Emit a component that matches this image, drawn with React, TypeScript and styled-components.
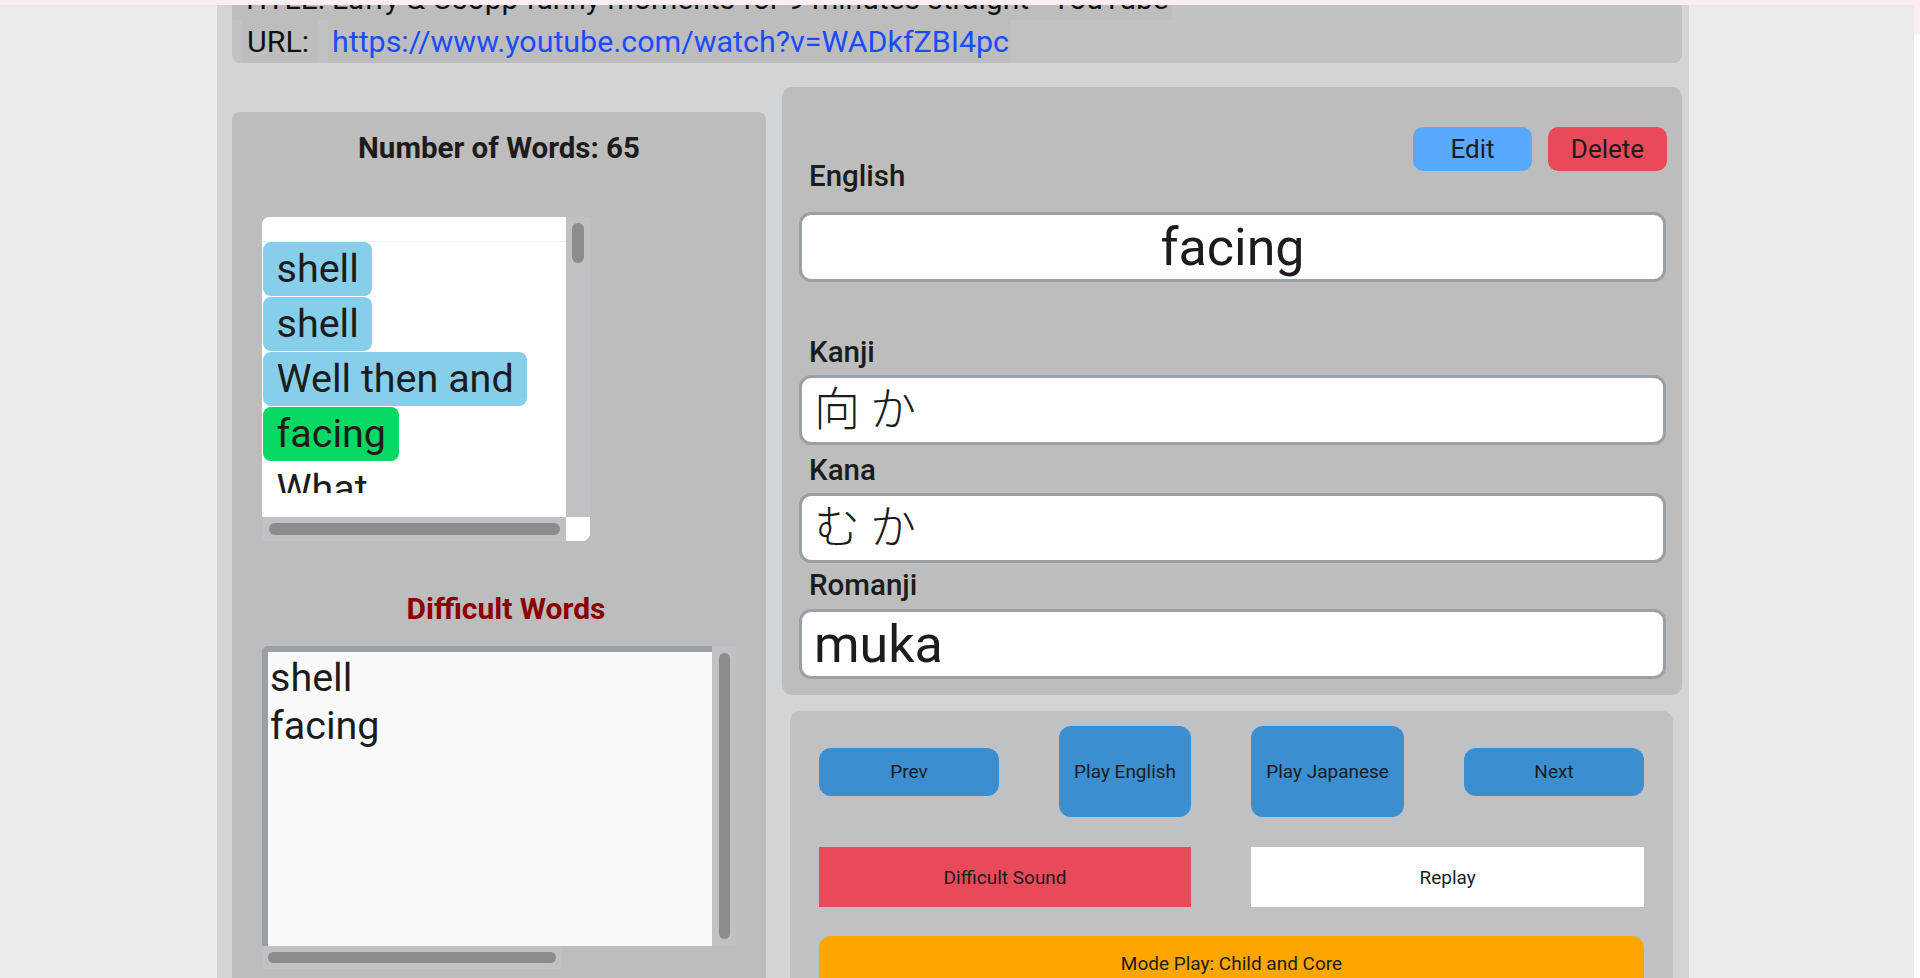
import React from "react";
import styled, { createGlobalStyle, css } from "styled-components";

const GlobalStyle = createGlobalStyle`
  html, body {
    margin: 0;
    padding: 0;
    overflow: hidden;
    background: #ebebeb;
  }
  body {
    font-family: Roboto, "Noto Sans", "Liberation Sans", sans-serif;
    color: #1c1c1c;
  }
  * { box-sizing: border-box; }
`;

const TopStripe = styled.div`
  position: fixed;
  top: 0;
  left: 0;
  right: 0;
  height: 5px;
  background: #fbeef3;
  z-index: 10;
`;

const EdgeStrip = styled.div`
  position: fixed;
  top: 0;
  right: 0;
  bottom: 0;
  width: 6px;
  background: linear-gradient(#fbeef3 0 35px, #ffffff 35px);
  z-index: 10;
`;

const Page = styled.div`
  width: 1472px;
  margin: -23px 0 0 217px;
  min-height: 1100px;
  background: #d1d5d8;
  padding: 0 7px 0 15px;
`;

/* ---------- header ---------- */

const HeaderCard = styled.header`
  background: #c1c2c5;
  border-radius: 0 0 8px 8px;
  display: flex;
  flex-direction: column;
  align-items: flex-start;
  line-height: 43px;
  color: #111;
`;

const TitleRow = styled.div`
  display: flex;
  height: 43px;
  background: #bdbdbd;
  padding: 0 3px 0 9px;
  font-size: 30px;
  white-space: nowrap;
`;

const TitleLabel = styled.span`
  flex: none;
  width: 91px;
`;

const UrlRow = styled.div`
  display: flex;
  gap: 11px;
  height: 43px;
  padding-left: 11px;
  font-size: 30.4px;
`;

const HeaderCell = styled.div<{ $width?: number }>`
  background: #bdbdbd;
  padding: 0 2px 0 4px;
  white-space: nowrap;
  ${(p) => (p.$width ? `width: ${p.$width}px;` : "")}
`;

const UrlLink = styled.a`
  color: #1a4cff;
  text-decoration: none;
`;

/* ---------- layout ---------- */

const Main = styled.div`
  display: flex;
  align-items: flex-start;
  gap: 16px;
  margin-top: 24px;
`;

const LeftCard = styled.section`
  flex: none;
  width: 534px;
  margin-top: 25px;
  background: #bdbdbd;
  border-radius: 8px;
  padding: 20px 30px 40px;
`;

const CardTitle = styled.h2<{ $color?: string; $gap?: number; $size: number; $shift?: number }>`
  margin: ${(p) => p.$gap ?? 0}px 0 0;
  padding-left: ${(p) => p.$shift ?? 0}px;
  font-size: ${(p) => p.$size}px;
  line-height: 33px;
  font-weight: 700;
  text-align: center;
  color: ${(p) => p.$color ?? "#1c1c1c"};
`;

/* ---------- word list ---------- */

const ListBox = styled.div`
  margin-top: 52px;
  width: 328px;
  height: 324px;
  display: grid;
  grid-template-columns: 304px 24px;
  grid-template-rows: 300px 24px;
  border-radius: 8px 0 8px 0;
  overflow: hidden;
  background: #fff;
`;

const ListViewport = styled.div`
  display: flex;
  flex-direction: column;
  background: #fff;
  overflow: hidden;
`;

const ListHead = styled.div`
  flex: none;
  height: 25px;
  border-bottom: 1px solid #efefef;
`;

const ListItems = styled.div`
  flex: 1;
  min-height: 0;
  overflow: hidden;
  display: flex;
  flex-direction: column;
  align-items: flex-start;
  gap: 1px;
  padding-left: 1px;
`;

const ListFoot = styled.div`
  flex: none;
  height: 24px;
  background: #fff;
`;

type Tone = "plain" | "seen" | "current";

const toneColor: Record<Tone, string> = {
  plain: "transparent",
  seen: "#87ceeb",
  current: "#07d964",
};

const WordChip = styled.div<{ $tone: Tone }>`
  flex: none;
  font-size: 39.5px;
  line-height: 46px;
  padding: 4px 13px 4px 13.5px;
  border-radius: 8px;
  white-space: nowrap;
  color: #1c1c1c;
  background: ${(p) => toneColor[p.$tone]};
`;

const Track = styled.div<{ $pad: string; $align?: string }>`
  background: #c0c1c4;
  padding: ${(p) => p.$pad};
  display: flex;
  ${(p) => (p.$align ? `justify-self: ${p.$align};` : "")}
`;

const Thumb = styled.div<{ $w: number; $h: number }>`
  flex: none;
  width: ${(p) => p.$w}px;
  height: ${(p) => p.$h}px;
  border-radius: 6px;
  background: #8c8c8c;
`;

const Corner = styled.div`
  background: #fff;
`;

/* ---------- difficult words ---------- */

const DiffBox = styled.div`
  margin-top: 21px;
  width: 474px;
  display: grid;
  grid-template-columns: 450px 24px;
  grid-template-rows: 300px 23px;
`;

const DiffText = styled.textarea`
  display: block;
  width: 100%;
  height: 100%;
  margin: 0;
  resize: none;
  overflow: hidden;
  background: #f9f9f9;
  border: 0;
  border-top: 6px solid #9aa0a6;
  border-left: 6px solid #9aa0a6;
  border-top-left-radius: 6px;
  padding: 2px 3px 0 2px;
  font-family: Roboto, "Noto Sans", sans-serif;
  font-size: 39.5px;
  line-height: 48px;
  color: #1c1c1c;
  outline: none;
`;

/* ---------- right column ---------- */

const RightCol = styled.div`
  flex: 1;
  display: flex;
  flex-direction: column;
  gap: 16px;
`;

const WordCard = styled.section`
  background: #bdbdbd;
  border-radius: 10px;
  padding: 40px 16px 16px 17px;
  display: flex;
  flex-direction: column;
`;

const TopRow = styled.div`
  display: flex;
  align-items: flex-start;
`;

const FieldLabel = styled.div<{ $gap: number }>`
  margin-top: ${(p) => p.$gap}px;
  padding-left: 10px;
  font-size: 29.5px;
  line-height: 32px;
  font-weight: 500;
  color: #1c1c1c;
`;

const ButtonGroup = styled.div`
  margin-left: auto;
  margin-right: -1px;
  display: flex;
  gap: 16px;
`;

const ActionButton = styled.button<{ $variant: "edit" | "delete" }>`
  width: 119px;
  height: 44px;
  border: 0;
  border-radius: 10px;
  font-family: Roboto, sans-serif;
  font-size: 26px;
  color: #1c1c1c;
  background: ${(p) => (p.$variant === "edit" ? "#58a9fd" : "#e84a5a")};
  cursor: pointer;
`;

const FieldBox = styled.div<{ $gap: number; $centered?: boolean; $cjk?: boolean }>`
  margin-top: ${(p) => p.$gap}px;
  height: 70px;
  border: 3px solid #9aa0a6;
  border-radius: 12px;
  background: #fff;
  display: flex;
  align-items: center;
  justify-content: ${(p) => (p.$centered ? "center" : "flex-start")};
  padding: 0 12px;
  color: #1c1c1c;
  white-space: nowrap;
  ${(p) =>
    p.$cjk
      ? css`
          padding-bottom: 11px;
          font-family: "Noto Sans CJK JP", "Noto Sans CJK SC", sans-serif;
          font-size: 46px;
          font-weight: 300;
          letter-spacing: 10px;
        `
      : css`
          font-size: 52px;
        `}
`;

/* ---------- controls ---------- */

const ControlCard = styled.section`
  margin: 0 9px 0 8px;
  background: #c0c1c4;
  border-radius: 10px;
  padding: 15px 29px 40px;
  display: grid;
  grid-template-columns: 180px auto auto 180px;
  grid-template-rows: 91px 60px 54px;
  justify-content: space-between;
  row-gap: 30px;
`;

const ControlButton = styled.button<{ $short?: boolean }>`
  border: 0;
  border-radius: 12px;
  background: #3b8ed0;
  padding: 0 15px;
  font-family: Roboto, sans-serif;
  font-size: 19px;
  color: #1c1c1c;
  white-space: nowrap;
  cursor: pointer;
  ${(p) =>
    p.$short &&
    css`
      height: 48px;
      align-self: center;
    `}
`;

const WideButton = styled.button<{ $tone: "danger" | "light" }>`
  grid-column: span 2;
  border: 0;
  border-radius: 0;
  font-family: Roboto, sans-serif;
  font-size: 19px;
  color: #1c1c1c;
  background: ${(p) => (p.$tone === "danger" ? "#e84a5a" : "#ffffff")};
  cursor: pointer;
`;

const ModeButton = styled.button`
  grid-column: 1 / -1;
  margin-top: -1px;
  border: 0;
  border-radius: 12px;
  background: #ffa500;
  font-family: Roboto, sans-serif;
  font-size: 19px;
  color: #1c1c1c;
  cursor: pointer;
`;

/* ---------- data ---------- */

const words: { text: string; tone: Tone }[] = [
  { text: "shell", tone: "seen" },
  { text: "shell", tone: "seen" },
  { text: "Well then and", tone: "seen" },
  { text: "facing", tone: "current" },
  { text: "What", tone: "plain" },
  { text: "liar", tone: "plain" },
  { text: "captain", tone: "plain" },
  { text: "brave warrior", tone: "plain" },
];

const difficultWords = ["shell", "facing"];

export default function App() {
  return (
    <>
      <GlobalStyle />
      <TopStripe />
      <EdgeStrip />
      <Page>
        <HeaderCard>
          <TitleRow>
            <TitleLabel>TITLE:</TitleLabel>
            <span>Luffy &amp; Usopp funny moments for 9 minutes straight - YouTube</span>
          </TitleRow>
          <UrlRow>
            <HeaderCell $width={74}>URL:</HeaderCell>
            <HeaderCell>
              <UrlLink href="https://www.youtube.com/watch?v=WADkfZBI4pc">
                https://www.youtube.com/watch?v=WADkfZBI4pc
              </UrlLink>
            </HeaderCell>
          </UrlRow>
        </HeaderCard>

        <Main>
          <LeftCard>
            <CardTitle $size={29.5}>Number of Words: 65</CardTitle>
            <ListBox>
              <ListViewport>
                <ListHead />
                <ListItems>
                  {words.map((w, i) => (
                    <WordChip key={i} $tone={w.tone}>
                      {w.text}
                    </WordChip>
                  ))}
                </ListItems>
                <ListFoot />
              </ListViewport>
              <Track $pad="6px">
                <Thumb $w={12} $h={40} />
              </Track>
              <Track $pad="6px 6px 6px 7px">
                <Thumb $w={291} $h={12} />
              </Track>
              <Corner />
            </ListBox>

            <CardTitle $size={30} $color="#8b0000" $gap={51} $shift={14}>
              Difficult Words
            </CardTitle>
            <DiffBox>
              <DiffText readOnly value={difficultWords.join("\n")} />
              <Track $pad="7px 6px 7px 6.5px">
                <Thumb $w={11.5} $h={286} />
              </Track>
              <Track $pad="6px 6px 6px 6px" $align="start">
                <Thumb $w={288} $h={11} />
              </Track>
            </DiffBox>
          </LeftCard>

          <RightCol>
            <WordCard>
              <TopRow>
                <FieldLabel $gap={33}>English</FieldLabel>
                <ButtonGroup>
                  <ActionButton $variant="edit">Edit</ActionButton>
                  <ActionButton $variant="delete">Delete</ActionButton>
                </ButtonGroup>
              </TopRow>
              <FieldBox $gap={20} $centered>
                facing
              </FieldBox>

              <FieldLabel $gap={54}>Kanji</FieldLabel>
              <FieldBox $gap={7} $cjk>
                向か
              </FieldBox>

              <FieldLabel $gap={9}>Kana</FieldLabel>
              <FieldBox $gap={7} $cjk>
                むか
              </FieldBox>

              <FieldLabel $gap={6}>Romanji</FieldLabel>
              <FieldBox $gap={8}>muka</FieldBox>
            </WordCard>

            <ControlCard>
              <ControlButton $short>Prev</ControlButton>
              <ControlButton>Play English</ControlButton>
              <ControlButton>Play Japanese</ControlButton>
              <ControlButton $short>Next</ControlButton>
              <WideButton $tone="danger">Difficult Sound</WideButton>
              <WideButton $tone="light">Replay</WideButton>
              <ModeButton>Mode Play: Child and Core</ModeButton>
            </ControlCard>
          </RightCol>
        </Main>
      </Page>
    </>
  );
}
